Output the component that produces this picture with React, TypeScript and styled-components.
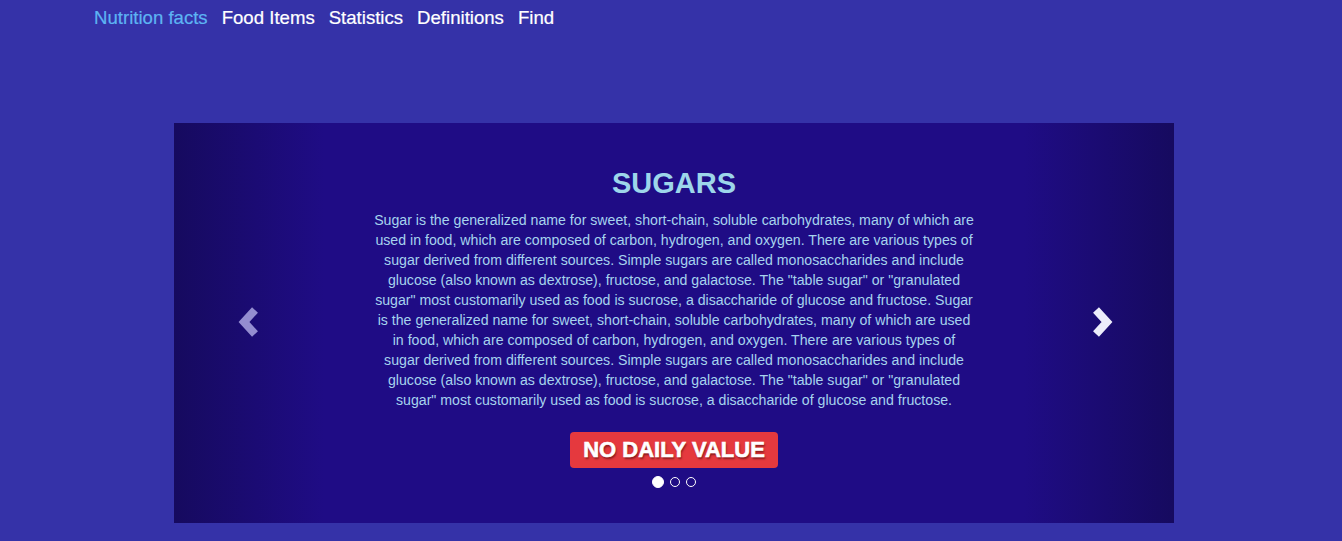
import React from "react";
import styled, { createGlobalStyle } from "styled-components";

const Global = createGlobalStyle`
  html, body { margin: 0; padding: 0; }
  body {
    background: #3532a8;
    font-family: "Liberation Sans", Arial, Helvetica, sans-serif;
  }
`;

const Page = styled.div`
  width: 1342px;
  min-height: 541px;
`;

const Nav = styled.nav`
  display: flex;
  gap: 14px;
  padding: 7px 0 0 94px;
  height: 30px;
`;

const NavLink = styled.a<{ $active?: boolean }>`
  font-size: 18.6px;
  line-height: 22px;
  color: ${(p) => (p.$active ? "#5db4f3" : "#ffffff")};
  text-decoration: none;
  cursor: pointer;
  -webkit-text-stroke: 0.2px currentColor;
`;

const Main = styled.main`
  display: flex;
  padding: 86px 0 0 174px;
`;

const Carousel = styled.section`
  width: 1000px;
  height: 400px;
  display: grid;
  grid-template-columns: 150px 1fr 150px;
  background: linear-gradient(
    to right,
    #160a5f 0px,
    #1f0c85 150px,
    #1f0c85 850px,
    #160a5f 1000px
  );
`;

const Control = styled.button<{ $bright?: boolean }>`
  display: flex;
  align-items: center;
  justify-content: center;
  background: none;
  border: 0;
  padding: 0 0 3px ${(p) => (p.$bright ? "3px" : "2px")};
  cursor: pointer;
  color: ${(p) => (p.$bright ? "#ececfb" : "#948dd0")};
`;

const Slide = styled.div`
  display: flex;
  flex-direction: column;
  align-items: center;
  padding-top: 43px;
`;

const Title = styled.h2`
  margin: 0;
  font-size: 29px;
  line-height: 34px;
  font-weight: 700;
  color: #9dd6ea;
`;

const Body = styled.p`
  margin: 10px 0 0;
  width: 601px;
  font-size: 14.15px;
  line-height: 20px;
  text-align: center;
  color: #a6d3ee;
`;

const Badge = styled.div`
  margin-top: 22px;
  height: 36px;
  padding: 0 13px;
  display: flex;
  align-items: center;
  background: #e5393e;
  border-radius: 4px;
  color: #ffffff;
  font-size: 22px;
  font-weight: 700;
  text-shadow: 1px 2px 2px rgba(60, 0, 0, 0.55);
  -webkit-text-stroke: 0.6px #ffffff;
`;

const Indicators = styled.ol`
  list-style: none;
  margin: 8px 0 0;
  padding: 0;
  display: flex;
  align-items: center;
  gap: 6px;
`;

const Dot = styled.li<{ $active?: boolean }>`
  box-sizing: border-box;
  width: ${(p) => (p.$active ? 12 : 10)}px;
  height: ${(p) => (p.$active ? 12 : 10)}px;
  border-radius: 50%;
  border: 1px solid #ffffff;
  background: ${(p) => (p.$active ? "#ffffff" : "transparent")};
`;

const Chevron = ({ dir }: { dir: "left" | "right" }) => (
  <svg width="24" height="32" viewBox="0 0 24 32" aria-hidden>
    <polyline
      points={dir === "left" ? "17,4 6,16 17,28" : "7,4 18,16 7,28"}
      fill="none"
      stroke="currentColor"
      strokeWidth="8"
      strokeLinejoin="miter"
      strokeLinecap="butt"
    />
  </svg>
);

const text =
  'Sugar is the generalized name for sweet, short-chain, soluble carbohydrates, many of which are used in food, which are composed of carbon, hydrogen, and oxygen. There are various types of sugar derived from different sources. Simple sugars are called monosaccharides and include glucose (also known as dextrose), fructose, and galactose. The "table sugar" or "granulated sugar" most customarily used as food is sucrose, a disaccharide of glucose and fructose.';

export default function App() {
  return (
    <Page>
      <Global />
      <Nav>
        <NavLink $active>Nutrition facts</NavLink>
        <NavLink>Food Items</NavLink>
        <NavLink>Statistics</NavLink>
        <NavLink>Definitions</NavLink>
        <NavLink>Find</NavLink>
      </Nav>
      <Main>
        <Carousel>
          <Control aria-label="Previous">
            <Chevron dir="left" />
          </Control>
          <Slide>
            <Title>SUGARS</Title>
            <Body>
              {text} {text}
            </Body>
            <Badge>NO DAILY VALUE</Badge>
            <Indicators>
              <Dot $active />
              <Dot />
              <Dot />
            </Indicators>
          </Slide>
          <Control $bright aria-label="Next">
            <Chevron dir="right" />
          </Control>
        </Carousel>
      </Main>
    </Page>
  );
}
